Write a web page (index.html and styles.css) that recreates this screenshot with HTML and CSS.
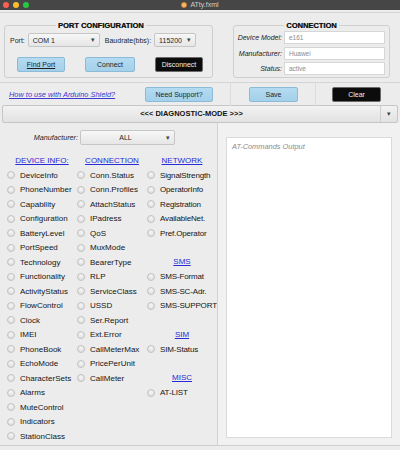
FILE: index.html
```html
<!DOCTYPE html>
<html>
<head>
<meta charset="utf-8">
<link rel="stylesheet" href="styles.css">
</head>
<body>
<div class="titlebar">
  <div class="lights"><span class="light red"></span><span class="light yellow"></span><span class="light green"></span></div>
  <div class="title"><span class="app-icon"></span>ATty.fxml</div>
  <div></div>
</div>
<div class="top">
  <fieldset class="group port">
    <legend>PORT CONFIGURATION</legend>
    <div class="port-row">
      <span class="lbl lbl-port">Port:</span>
      <div class="combo combo-port"><span class="combo-text">COM 1</span><span class="arrow">&#9662;</span></div>
      <span class="lbl lbl-baud">Baudrate(bbs):</span>
      <div class="combo combo-baud"><span class="combo-text">115200</span><span class="arrow">&#9662;</span></div>
    </div>
    <div class="btn-row">
      <button class="btn blue find"><u>Find Port</u></button>
      <button class="btn blue connect">Connect</button>
      <button class="btn dark disconnect">Disconnect</button>
    </div>
  </fieldset>
  <fieldset class="group conn">
    <legend>CONNECTION</legend>
    <div class="field"><span class="flabel">Device Model:</span><div class="input">e161</div></div>
    <div class="field"><span class="flabel">Manufacturer:</span><div class="input">Huawei</div></div>
    <div class="field"><span class="flabel">Status:</span><div class="input">active</div></div>
  </fieldset>
</div>
<div class="actions">
  <div class="cell cell-link"><a class="link">How to use with Arduino Shield?</a></div>
  <div class="cell cell-support"><button class="btn blue support">Need Support?</button></div>
  <div class="cell cell-save"><button class="btn blue save">Save</button></div>
  <div class="cell cell-clear"><button class="btn dark clear">Clear</button></div>
</div>
<div class="diag">
  <div class="diag-text">&lt;&lt;&lt; DIAGNOSTIC-MODE &gt;&gt;&gt;</div>
  <div class="diag-arrow">&#9662;</div>
</div>
<div class="main">
  <div class="left">
    <div class="manu-row">
      <span class="manu-lbl">Manufacturer:</span>
      <div class="combo combo-manu"><span class="combo-text center">ALL</span><span class="arrow">&#9662;</span></div>
    </div>
    <div class="cols">
      <div class="col">
        <div class="head">DEVICE INFO:</div>
        <div class="opt"><span class="radio"></span>DeviceInfo</div>
        <div class="opt"><span class="radio"></span>PhoneNumber</div>
        <div class="opt"><span class="radio"></span>Capability</div>
        <div class="opt"><span class="radio"></span>Configuration</div>
        <div class="opt"><span class="radio"></span>BatteryLevel</div>
        <div class="opt"><span class="radio"></span>PortSpeed</div>
        <div class="opt"><span class="radio"></span>Technology</div>
        <div class="opt"><span class="radio"></span>Functionality</div>
        <div class="opt"><span class="radio"></span>ActivityStatus</div>
        <div class="opt"><span class="radio"></span>FlowControl</div>
        <div class="opt"><span class="radio"></span>Clock</div>
        <div class="opt"><span class="radio"></span>IMEI</div>
        <div class="opt"><span class="radio"></span>PhoneBook</div>
        <div class="opt"><span class="radio"></span>EchoMode</div>
        <div class="opt"><span class="radio"></span>CharacterSets</div>
        <div class="opt"><span class="radio"></span>Alarms</div>
        <div class="opt"><span class="radio"></span>MuteControl</div>
        <div class="opt"><span class="radio"></span>Indicators</div>
        <div class="opt"><span class="radio"></span>StationClass</div>
      </div>
      <div class="col">
        <div class="head">CONNECTION</div>
        <div class="opt"><span class="radio"></span>Conn.Status</div>
        <div class="opt"><span class="radio"></span>Conn.Profiles</div>
        <div class="opt"><span class="radio"></span>AttachStatus</div>
        <div class="opt"><span class="radio"></span>IPadress</div>
        <div class="opt"><span class="radio"></span>QoS</div>
        <div class="opt"><span class="radio"></span>MuxMode</div>
        <div class="opt"><span class="radio"></span>BearerType</div>
        <div class="opt"><span class="radio"></span>RLP</div>
        <div class="opt"><span class="radio"></span>ServiceClass</div>
        <div class="opt"><span class="radio"></span>USSD</div>
        <div class="opt"><span class="radio"></span>Ser.Report</div>
        <div class="opt"><span class="radio"></span>Ext.Error</div>
        <div class="opt"><span class="radio"></span>CallMeterMax</div>
        <div class="opt"><span class="radio"></span>PricePerUnit</div>
        <div class="opt"><span class="radio"></span>CallMeter</div>
      </div>
      <div class="col">
        <div class="head">NETWORK</div>
        <div class="opt"><span class="radio"></span>SignalStrength</div>
        <div class="opt"><span class="radio"></span>OperatorInfo</div>
        <div class="opt"><span class="radio"></span>Registration</div>
        <div class="opt"><span class="radio"></span>AvailableNet.</div>
        <div class="opt"><span class="radio"></span>Pref.Operator</div>
        <div class="opt"></div>
        <div class="head">SMS</div>
        <div class="opt"><span class="radio"></span>SMS-Format</div>
        <div class="opt"><span class="radio"></span>SMS-SC-Adr.</div>
        <div class="opt"><span class="radio"></span>SMS-SUPPORT</div>
        <div class="opt"></div>
        <div class="head">SIM</div>
        <div class="opt"><span class="radio"></span>SIM-Status</div>
        <div class="opt"></div>
        <div class="head">MISC</div>
        <div class="opt"><span class="radio"></span>AT-LIST</div>
      </div>
    </div>
  </div>
  <div class="right">
    <div class="output">AT-Commands Output</div>
  </div>
</div>
</body>
</html>
```
FILE: styles.css
```css
* { box-sizing: border-box; }
body {
  margin: 0;
  width: 400px;
  height: 450px;
  overflow: hidden;
  background: #ececec;
  font-family: "Liberation Sans", Arial, sans-serif;
  color: #1e1e1e;
}
.titlebar {
  height: 10px;
  background: #464646;
  display: grid;
  grid-template-columns: 1fr auto 1fr;
  align-items: center;
}
.lights { display: flex; gap: 4px; padding-left: 3px; }
.light { width: 6px; height: 6px; border-radius: 50%; display: block; }
.red { background: #fc5f57; }
.yellow { background: #fdbc2e; }
.green { background: #28c840; }
.title {
  font-size: 7px;
  color: #d0d0d0;
  display: flex;
  align-items: center;
  gap: 3px;
  line-height: 10px;
}
.app-icon {
  width: 6px; height: 6px; border-radius: 50%;
  background: radial-gradient(circle, #f0c070 30%, #c8702a 70%);
  display: block;
}
.top {
  margin-top: 2px;
  height: 70px;
  border-top: 1px solid #d4d4d4;
  display: flex;
  align-items: flex-start;
}
.group {
  margin: 7.5px 0 0 0;
  padding: 3.5px 0 5px 0;
  border: 1px solid #cfcfcf;
  border-radius: 3px;
  min-width: 0;
}
.group legend {
  font-size: 7.5px;
  font-weight: bold;
  line-height: 9px;
  padding: 0 2px;
  color: #111;
  text-shadow: 0.3px 0.3px 0 #555;
}
.port { margin-left: 4px; width: 209px; }
.port legend { margin-left: 51px; }
.conn { margin-left: 20px; width: 157px; padding-top: 1.5px; padding-bottom: 2px; }
.conn legend { margin: 0 auto; }
.port-row {
  display: flex;
  align-items: center;
  height: 14px;
}
.lbl { font-size: 7px; }
.lbl-port { margin-left: 5px; }
.lbl-baud { margin-left: 5px; }
.combo {
  height: 14px;
  border: 1px solid #c6c6c6;
  border-radius: 2px;
  background: linear-gradient(#f7f7f7, #e6e6e6);
  display: flex;
  align-items: center;
  font-size: 7px;
  padding: 0 4px 0 4px;
}
.combo-text { flex: 1; }
.combo-text.center { text-align: center; }
.arrow { font-size: 7px; color: #444; }
.combo-port { margin-left: 3px; width: 72px; }
.combo-baud { margin-left: 3px; width: 42px; }
.btn-row {
  display: flex;
  margin-top: 10px;
  height: 15px;
}
.btn {
  height: 15px;
  font-family: inherit;
  font-size: 7px;
  padding: 0;
  border-radius: 2px;
  cursor: default;
}
.btn.blue {
  background: linear-gradient(#b4dbf1, #a4d0ea);
  border: 1px solid #8bbbd8;
  color: #1e1e1e;
}
.btn.dark {
  background: #0c0c0c;
  border: 1px solid #6a6a6a;
  color: #f0f0f0;
}
.find { margin-left: 12px; width: 48px; }
.connect { margin-left: 20px; width: 50px; }
.disconnect { margin-left: 20px; width: 48px; }
.field {
  display: flex;
  align-items: center;
  height: 13px;
  margin-bottom: 2.5px;
}
.field:last-child { margin-bottom: 0; }
.flabel {
  width: 48px;
  text-align: right;
  font-size: 7px;
  font-style: italic;
  color: #222;
}
.input {
  margin-left: 2px;
  width: 101px;
  height: 13px;
  background: #fff;
  border: 1px solid #d6d6d6;
  font-size: 6.5px;
  color: #8a8a8a;
  padding-left: 4px;
  line-height: 11px;
}
.actions {
  height: 24px;
  border-top: 1px solid #d4d4d4;
  display: flex;
}
.cell { display: flex; align-items: center; height: 23px; }
.cell-link { width: 140px; padding-left: 9px; }
.link {
  font-size: 7.4px;
  color: #3a3ad0;
  text-decoration: underline;
  font-style: italic;
}
.cell-support { width: 90px; padding-left: 5px; }
.support { width: 68px; }
.cell-save { width: 85px; border-left: 1px solid #dcdcdc; padding-left: 18px; }
.save { width: 49px; }
.cell-clear { flex: 1; border-left: 1px solid #dcdcdc; padding-left: 16px; }
.clear { width: 49px; }
.diag {
  margin: -1px 2px 0 2px;
  height: 18px;
  border: 1px solid #c6c6c6;
  border-radius: 2px;
  background: linear-gradient(#f2f2f2, #e2e2e2);
  display: flex;
}
.diag-text {
  flex: 1;
  text-align: center;
  font-size: 7.5px;
  font-weight: bold;
  line-height: 16px;
  color: #111;
}
.diag-arrow {
  width: 17px;
  border-left: 1px solid #cfcfcf;
  text-align: center;
  font-size: 7px;
  line-height: 16px;
  color: #444;
}
.main {
  display: flex;
  height: 323px;
  border-bottom: 1px solid #cfcfcf;
}
.left { width: 217px; }
.manu-row {
  display: flex;
  align-items: center;
  margin-top: 7px;
  height: 15px;
}
.manu-lbl {
  width: 78px;
  text-align: right;
  font-size: 7.2px;
  font-style: italic;
}
.combo-manu { margin-left: 2px; width: 95px; height: 15px; }
.cols {
  display: flex;
  margin-top: 8.5px;
  padding-left: 7px;
}
.col { width: 70px; display: flex; flex-direction: column; }
.head {
  height: 14.5px;
  line-height: 14.5px;
  text-align: center;
  font-size: 8px;
  color: #2a2ad8;
  text-decoration: underline;
}
.opt {
  height: 14.5px;
  display: flex;
  align-items: center;
  font-size: 8px;
  color: #151515;
  white-space: nowrap;
}
.col:last-child .opt { letter-spacing: -0.15px; }
.radio {
  width: 8px;
  height: 8px;
  border-radius: 50%;
  border: 1px solid #c2c2c2;
  background: radial-gradient(circle at 50% 35%, #f6f6f6, #d9d9d9);
  margin-right: 5px;
  flex: none;
}
.right {
  flex: 1;
  border-left: 1px solid #d2d2d2;
  background: #f1f1f1;
  padding: 14px 0 0 8px;
}
.output {
  width: 166px;
  height: 301px;
  background: #fff;
  border: 1px solid #dadada;
  font-size: 7.4px;
  font-style: italic;
  color: #8c8c8c;
  padding: 4px 0 0 5px;
}
```
